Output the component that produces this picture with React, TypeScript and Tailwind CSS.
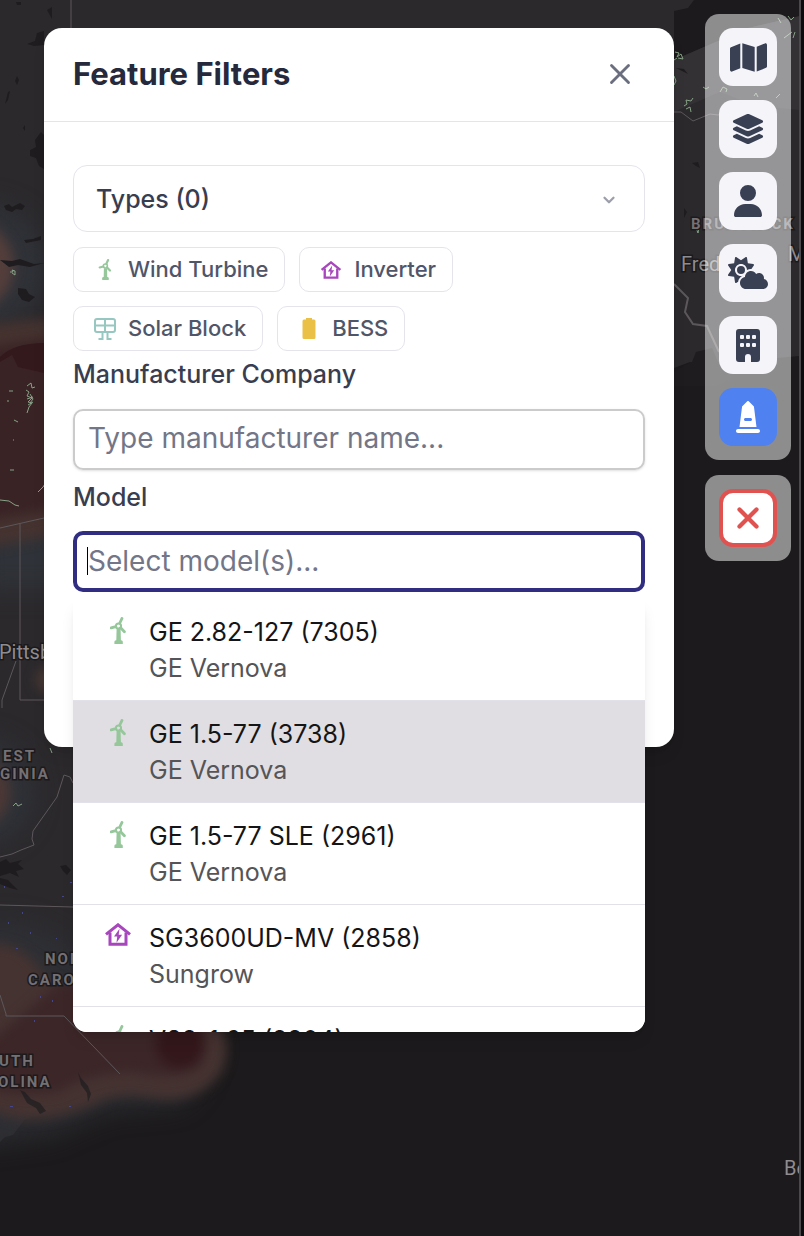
import React, { useState } from "react";
import { X, ChevronDown } from "lucide-react";
import { FaMap, FaLayerGroup, FaUser, FaCloudSun, FaMonument } from "react-icons/fa6";

type IconProps = { className?: string };

function WindTurbineIcon({ className }: IconProps) {
  return (
    <svg viewBox="0 0 16 27" fill="currentColor" stroke="currentColor" className={className} aria-hidden="true">
      <circle cx="8.5" cy="9" r="2.6" fill="none" strokeWidth="2" />
      <path d="M9.8 6 12 1.4M5.8 9.6 1.2 10.9M10.6 10.800l3.8 4" strokeWidth="2.8" strokeLinecap="round" />
      <path d="M6.6 12h4l.3 12H6.300z" stroke="none" />
      <path d="M4.400 27v-2.200q0-1.600 1.600-1.600h5.200q1.600 0 1.600 1.600V27z" stroke="none" />
    </svg>
  );
}

function InverterIcon({ className }: IconProps) {
  return (
    <svg viewBox="0 0 26 23" fill="none" stroke="currentColor" className={className} aria-hidden="true">
      <path d="M1 11.4 13 1.8l12 9.6" strokeWidth="3" />
      <path d="M5 9.5v11.8h16V9.5" strokeWidth="3" />
      <path d="m14.5 5.8-5.5 7.6h3.2l-.7 6.4 5.6-8h-3.4z" fill="currentColor" stroke="none" />
    </svg>
  );
}

function SolarIcon({ className }: IconProps) {
  return (
    <svg viewBox="0 0 22 22" fill="none" stroke="currentColor" strokeWidth="2" className={className} aria-hidden="true">
      <rect x="1" y="1" width="20" height="13" rx="2" />
      <path d="M1 7.5h20M11 1v13M8.5 14v6.5M13.5 14v6.5M4.5 21h5M12.5 21h5" />
    </svg>
  );
}

function BatteryIcon({ className }: IconProps) {
  return (
    <svg viewBox="0 0 13 21" fill="currentColor" className={className} aria-hidden="true">
      <path d="M3.5 0h6v1.6h2q1.5 0 1.5 1.5v16.4q0 1.5-1.5 1.5h-10Q0 21 0 19.5V3.1q0-1.5 1.5-1.5h2z" />
    </svg>
  );
}

function BuildingIcon({ className }: IconProps) {
  return (
    <svg viewBox="0 0 24 33" fill="currentColor" className={className} aria-hidden="true">
      <path d="M3 0h18q3 0 3 3v27q0 3-3 3h-6v-5a3 3 0 0 0-6 0v5H3q-3 0-3-3V3q0-3 3-3z" />
      <g fill="#f4f4f9">
        <rect x="4" y="6" width="4" height="4" rx="1" />
        <rect x="10" y="6" width="4" height="4" rx="1" />
        <rect x="16" y="6" width="4" height="4" rx="1" />
        <rect x="4" y="14" width="4" height="4" rx="1" />
        <rect x="10" y="14" width="4" height="4" rx="1" />
        <rect x="16" y="14" width="4" height="4" rx="1" />
      </g>
    </svg>
  );
}

const TYPES = [
  { label: "Wind Turbine", icon: <WindTurbineIcon className="h-[21px] w-[22px] text-[#96c79b]" /> },
  { label: "Inverter", icon: <InverterIcon className="h-[18px] w-[22px] text-[#a846bd]" /> },
  { label: "Solar Block", icon: <SolarIcon className="size-[22px] text-[#96c7c0]" /> },
  { label: "BESS", icon: <BatteryIcon className="h-[21px] w-[22px] text-[#ebc047]" /> }
];

const MODELS = [
  { name: "GE 2.82-127", count: 7305, maker: "GE Vernova", kind: "wind" },
  { name: "GE 1.5-77", count: 3738, maker: "GE Vernova", kind: "wind" },
  { name: "GE 1.5-77 SLE", count: 2961, maker: "GE Vernova", kind: "wind" },
  { name: "SG3600UD-MV", count: 2858, maker: "Sungrow", kind: "inverter" },
  { name: "V82-1.65", count: 2204, maker: "Vestas", kind: "wind" }
];

const TOOLS = [
  { label: "Basemap", icon: <FaMap className="size-[37px]" /> },
  { label: "Layers", icon: <FaLayerGroup className="size-[34px]" /> },
  { label: "Account", icon: <FaUser className="size-8" /> },
  { label: "Weather", icon: <FaCloudSun className="size-10" /> },
  { label: "Buildings", icon: <BuildingIcon className="h-[33px] w-6" /> },
  { label: "Landmarks", icon: <FaMonument className="size-8" /> }
];

function MapBackground() {
  return (
    <svg
      className="absolute inset-0 size-full"
      viewBox="0 0 800 1236"
      preserveAspectRatio="xMinYMin slice"
      aria-hidden="true"
      fontFamily="Roboto, sans-serif"
    >
      <defs>
        <filter id="soft" x="-30%" y="-30%" width="160%" height="160%" colorInterpolationFilters="sRGB">
          <feGaussianBlur stdDeviation="6" />
        </filter>
        <filter id="wide" x="-40%" y="-40%" width="180%" height="180%" colorInterpolationFilters="sRGB">
          <feGaussianBlur stdDeviation="12" />
        </filter>
      </defs>
      <rect width="800" height="1236" fill="#1c1a1c" />

      {/* Land */}
      <path d="M0 0h694l-6 8-14 3v49l74-32 52-12v340l-44 4-36 14-30-12-16 6-400 420-154 252-9 22-10 8-18 5-8 14-18 10-10 14-22 6-12 16-8 2-12 12-9 2z" fill="#2b292c" />
      <path d="M674 60l74-32 52-12v94l-44-4-36-14-46 20z" fill="#333134" />

      {/* Heat */}
      <g filter="url(#wide)" fill="#2f3238">
        <circle cx="-16" cy="266" r="62" />
        <path d="M-20 480h90v110h-90z" />
        <circle cx="-20" cy="792" r="54" />
        <path d="M-30 925q90-20 130 60l100 30q26 50-20 90l-70 6-60 26-80 10z" fillOpacity="0.7" />
      </g>
      <g filter="url(#soft)">
        <circle cx="-32" cy="266" r="46" fill="#543e3b" />
        <path d="M-20 326q70-10 120-6v207l-120 22z" fill="#453330" />
        <ellipse cx="52" cy="680" rx="16" ry="14" fill="#4a3834" />
        <circle cx="-28" cy="792" r="38" fill="#4c3835" />
        <path d="M-20 945q40-8 64 30l30 18 134 22q28 18 14 56-22 32-64 28-40-8-60 4-40 18-76 16-24-4-42-12z" fill="#453331" />
      </g>
      <g filter="url(#soft)">
        <path d="M-20 350q60-14 110-14v168q-50 8-110 18z" fill="#3a2325" />
        <path d="M-20 1050q60-50 80-68l134 30q22 24 6 56-30 14-70 4-50 4-70 20-40 6-80-4z" fill="#3c2628" />
        <ellipse cx="180" cy="1044" rx="24" ry="24" fill="#33171a" />
      </g>
      <path d="M0 362l12-7 6 12 26 6v-30q-30 0-44 14z" fill="#34191c" />

      {/* Borders */}
      <g fill="none" stroke="#5c575a" strokeWidth="1">
        <path d="M71 0v28M0 528l44-10M20 524v176h24M16 661L2 700v8" />
        <path d="M73 783l-3-6-6-2-7 22-24 34-1 8 2 6-13 5-9 4-12 3M0 905l73 2M0 995l6 19v2h58l56 58" />
        <path d="M674 112h7l12 9 17-7 8 1 10-3" />
        <path d="M674 284l14 14-3 14 8 12 14 2 12 26" strokeWidth="2" />
      </g>

      {/* Water and relief patches */}
      <g fill="#1e1c1f">
        <path d="M16 2h5v3h-4zM27 44l8-3 2-8 7-2v14l-10 1zM17 76l2 4-2 5-2-4zM8 92l2-1-2 9-3 4zM23 128l2-3v6zM30 150l6-3-1-7 6-8 3 3v34l-5-3-3-8-6-2z" />
        <path d="M4 206l5-2 3 3 8-4 5 3-3 4-6-1-4 3-6-2zM24 240l9-1 8-3v4l-15 3zM0 260l12 1 8-2 14 5 10-1-14 4-12-2-9 2zM18 288l8 1 3 5 6 3-6 5-7-2-4-6zM47 10l5-3v12z" />
        <path d="M0 862l6-3 4 4 12-3-4 4 6 5-8 2 3 6-9-4-10 3zM0 878l8 2 6 6 4 4-8-2-10-4zM60 866l6-1 5 5-4 5-4-4z" />
        <path d="M20 1090l5 2 6 7 9 4 6 8-6 3-4-6-9-5zM78 1072l3 6 7 8 3 8-3 8-1-9-6-8z" fillOpacity="0.7" />
        <path d="M676 68l8 1 4 5-6-3zM692 163l6-1 2 6-4-2zM684 208l3 4-3 6zM674 372l10-6 8-4 4-10 16-4 6 14 8 2 6 14-16 8h-42z" />
      </g>

      {/* Site clusters */}
      <g fill="none" stroke="#87a287" strokeWidth="1">
        <path d="M10 272h3l-1-2 3 1v4l-3-2M27 386l4-3 1 5 3-1M26 390l3 2-2 4 5 2-4 4 4 1-3 4-2 6M30 394l3 5-3 4M27 399l6-2M28 405l5-3M9 391h4M7 401h2M14 420l4 2M13 440h1M10 470h4M0 500l9 1 6 4 4 1M38 492l5-5 2-3M13 806l3-3 2 3 4-2M50 748l2 5" />
        <path d="M675 52l4 1-2 4 4-3 2 5-5-1M674 60l3-2M674 76l2 5-2 4M684 106l3-2-1-4 5 1 2-3M686 109l4-2 1 5M703 87l3 2 3-2M720 92l3-5 4 2-1 3M778 18l3 5M788 16l3 4 3-3M784 38l8-6M793 38l2-6M754 96l2-3 2 4M776 98l4-4M696 228l2 5 1-6" />
      </g>
      <g fill="#45478a">
        <path d="M8 922h1v2h-1zM30 932h1v2h-1zM62 896h2v1h-2zM16 948h2v1h-2zM40 996h1v2h-1zM70 882h2v1h-2zM10 1106h3v1h-3zM69 1106h2v1h-2zM22 912h1v2h-1zM56 938h1v1h-1zM52 1000h1v2h-1zM34 1020h1v2h-1zM4 886h1v2h-1z" />
      </g>

      {/* Place names */}
      <g fill="#8f8c8f" stroke="#1c1a1c" strokeWidth="3" paintOrder="stroke" fontSize="20">
        <text x="-1" y="659">Pittsb</text>
        <text x="681" y="271">Frederick</text>
        <text x="788" y="261">M</text>
        <text x="784" y="1175">Be</text>
        <g fill="#747073" fontWeight="700" fontSize="15" letterSpacing="2">
          <text x="691" y="229">BRUNSWICK</text>
          <text x="3" y="761">EST</text>
          <text x="0" y="779">GINIA</text>
          <text x="45" y="964">NORTH</text>
          <text x="28" y="985">CAROLINA</text>
          <text x="-1" y="1066">UTH</text>
          <text x="-2" y="1087">OLINA</text>
        </g>
      </g>
    </svg>
  );
}

export default function App() {
  const [showPanel, setShowPanel] = useState(true);
  const [activeTool, setActiveTool] = useState("Landmarks");
  const [highlighted, setHighlighted] = useState(1);

  return (
    <div className="flex min-h-screen bg-[#0c0a0c] font-['Inter',sans-serif]">
      <main className="relative flex flex-1 items-start gap-[31px] overflow-hidden border-r-2 border-[#4b494c] pl-11 pr-2">
        <MapBackground />

        {/* Filter panel */}
        {showPanel && (
          <section className="relative mt-7 min-w-0 flex-1 rounded-[18px] bg-white shadow-lg">
            <header className="flex items-center justify-between border-b border-[#e5e4ec] px-[29px] pb-[23px] pt-[22px]">
              <h1 className="text-[31px] font-bold leading-[48px] text-[#25293b]">Feature Filters</h1>
              <button aria-label="Close" onClick={() => setShowPanel(false)} className="px-2 text-[#6b6e7e]">
                <X className="size-[34px]" strokeWidth={2} />
              </button>
            </header>

            <div className="px-[29px] pb-[155px] pt-[43px]">
              <button className="flex h-[67px] w-full items-center justify-between rounded-[14px] border border-[#e5e4ec] px-[22px] pt-0.5 text-[25px] font-medium text-[#383d50]">
                Types (0)
                <ChevronDown className="mr-1 size-[18px] text-[#9c9ea9]" strokeWidth={3} />
              </button>

              <div className="mt-[15px] flex flex-wrap gap-[14px]">
                {TYPES.map((t) => (
                  <button
                    key={t.label}
                    className="flex h-[45px] items-center gap-3 rounded-[10px] border border-[#e5e4ec] pl-5 pr-4 text-[22px] font-medium text-[#50566a]"
                  >
                    {t.icon}
                    {t.label}
                  </button>
                ))}
              </div>

              <label htmlFor="manufacturer" className="mt-[5px] block text-[25px] font-medium leading-9 text-[#383d50]">
                Manufacturer Company
              </label>
              <input
                id="manufacturer"
                type="text"
                placeholder="Type manufacturer name..."
                className="mt-[17px] block h-[61px] w-full rounded-[10px] border-2 border-[#cbcbcb] px-[13px] pb-1 text-[28px] shadow-sm placeholder:text-[#727687]"
              />

              <label htmlFor="model" className="mt-[9px] block text-[25px] font-medium leading-9 text-[#383d50]">
                Model
              </label>
              <div className="relative mt-4">
                <input
                  id="model"
                  type="text"
                  placeholder="Select model(s)..."
                  className="block h-[61px] w-full rounded-[10px] border-4 border-[#312e81] px-[11px] pb-0.5 text-[28px] caret-transparent outline-none placeholder:text-[#727687]"
                />
                <span className="absolute left-[14px] top-4 h-7 w-px bg-black" />

                {/* Model options */}
                <ul
                  role="listbox"
                  aria-label="Model"
                  className="absolute inset-x-0 top-full mt-[7px] max-h-[433px] overflow-hidden rounded-b-[14px] bg-white shadow-lg"
                >
                  {MODELS.map((m, i) => (
                    <li
                      key={m.name}
                      role="option"
                      aria-selected={i === highlighted}
                      onMouseEnter={() => setHighlighted(i)}
                      className={`flex h-[102px] border-b border-[#e2e1ea] pt-[15px] text-[25px] leading-9 ${i === highlighted ? "bg-[#e0dee2]" : "bg-white"}`}
                    >
                      <span className="flex w-[76px] shrink-0 justify-center pl-[14px] pt-[3px]">
                        {m.kind === "wind" ? (
                          <WindTurbineIcon className="h-[27px] w-4 text-[#96c79b]" />
                        ) : (
                          <InverterIcon className="h-[23px] w-[26px] text-[#a846bd]" />
                        )}
                      </span>
                      <span className="flex flex-col">
                        <span className="text-[#151517]">{m.name} ({m.count})</span>
                        <span className="text-[#555457]">{m.maker}</span>
                      </span>
                    </li>
                  ))}
                </ul>
              </div>
            </div>
          </section>
        )}

        {/* Toolbar */}
        <aside className="relative ml-auto mt-[14px] flex shrink-0 flex-col gap-[15px]">
          <nav className="flex flex-col gap-[14px] rounded-[14px] bg-white/50 p-[14px]">
            {TOOLS.map((tool) => (
              <button
                key={tool.label}
                aria-label={tool.label}
                onClick={() => setActiveTool(tool.label)}
                className={`flex size-[58px] items-center justify-center rounded-[14px] ${
                  activeTool === tool.label ? "bg-[#4f81f0] text-white" : "bg-[#f4f4f9] text-[#3a4054]"
                }`}
              >
                {tool.icon}
              </button>
            ))}
          </nav>
          <div className="rounded-[14px] bg-white/50 p-[14px]">
            <button
              aria-label="Clear"
              className="flex size-[58px] items-center justify-center rounded-[14px] border-4 border-[#e0524f] bg-white text-[#e0524f]"
            >
              <X className="size-[34px]" strokeWidth={3} />
            </button>
          </div>
        </aside>
      </main>
      <div className="w-[3px] bg-[#0c0a0c]" />
    </div>
  );
}
